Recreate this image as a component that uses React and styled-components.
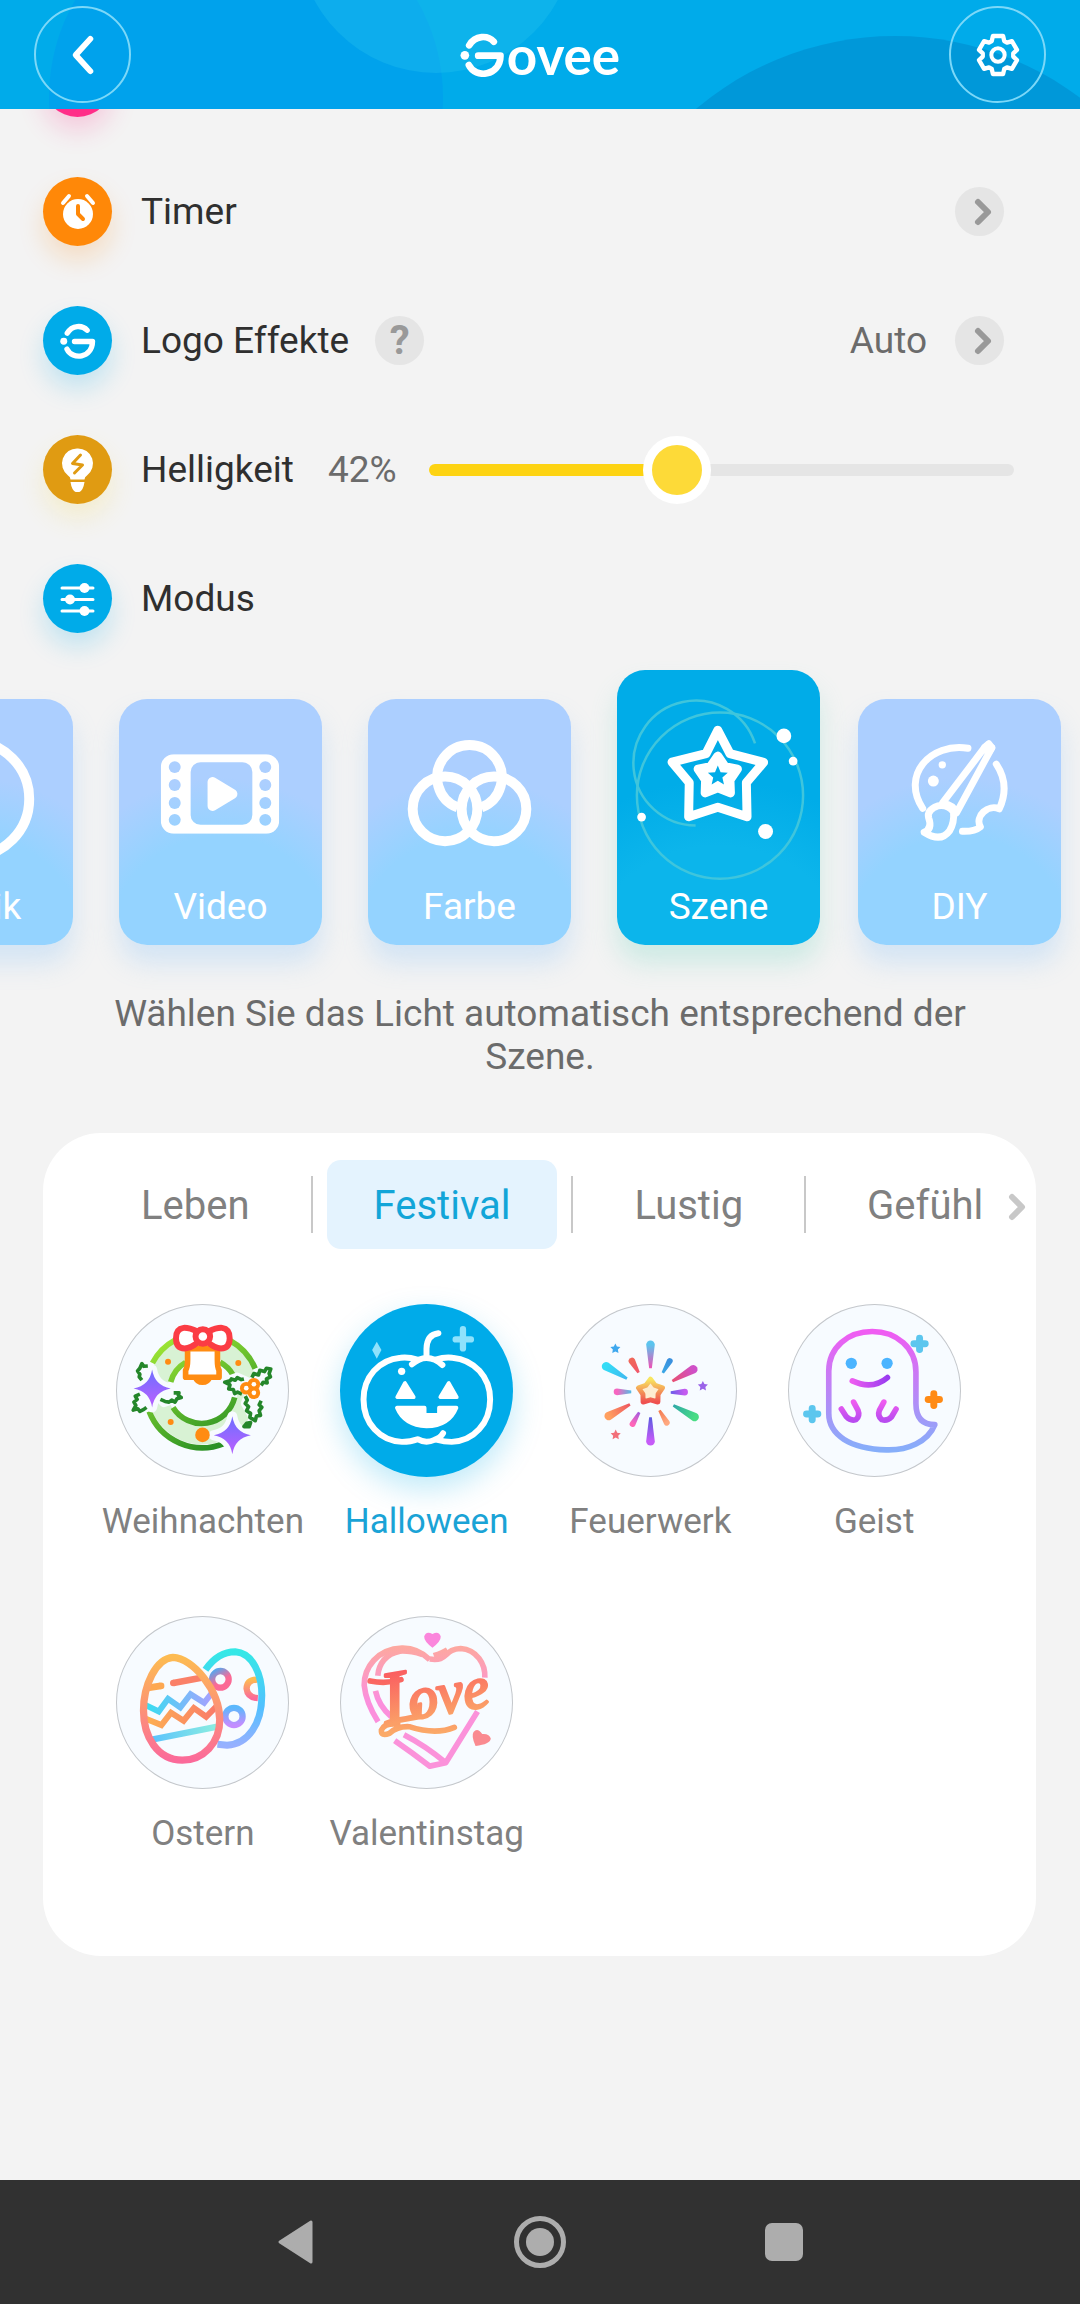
import React, { useState } from 'react';
import styled, { createGlobalStyle } from 'styled-components';

const GlobalStyle = createGlobalStyle`
  * {
    box-sizing: border-box;
  }

  body {
    margin: 0;
    background-color: #f3f3f3;
    font-family: Roboto, 'Liberation Sans', sans-serif;
    font-size: 37px;
    color: #2f2f2f;
  }

  button {
    padding: 0;
    border: none;
    background: none;
    font: inherit;
    color: inherit;
    cursor: pointer;
  }

  svg {
    display: block;
  }
`;

const Page = styled.div`
  display: flex;
  flex-direction: column;
  min-height: 100vh;
  overflow-x: hidden;
`;

/* ---------- header ---------- */

const Header = styled.header`
  position: relative;
  z-index: 2;
  display: flex;
  align-items: center;
  justify-content: space-between;
  height: 109px;
  padding: 0 34px;
  overflow: hidden;
  background-color: #00abea;
`;

const HeaderBubbles = styled.svg`
  position: absolute;
  top: 0;
  left: 0;
  z-index: -1;
  width: 100%;
  height: 109px;
`;

const RoundButton = styled.button`
  display: flex;
  align-items: center;
  justify-content: center;
  width: 97px;
  height: 97px;
  border: 2px solid #7cd8f8;
  border-radius: 50%;
`;

const Brand = styled.h1`
  display: flex;
  align-items: center;
  gap: 2px;
  margin: 0;
  font-family: Lato, 'Liberation Sans', sans-serif;
  font-size: 53px;
  font-weight: 700;
  line-height: 44px;
  color: #ffffff;
`;

/* ---------- settings list ---------- */

const Main = styled.main`
  flex: 1;
`;

/* the list is scrolled, its first row is half under the header */
const SettingsList = styled.div`
  margin-top: -91px;
`;

const Row = styled.div`
  display: flex;
  align-items: center;
  height: 129px;
  padding: 0 ${props => (props.$wide ? '66px' : '76px')} 0 43px;
`;

const RowIcon = styled.span`
  display: flex;
  flex-shrink: 0;
  align-items: center;
  justify-content: center;
  width: 69px;
  height: 69px;
  margin-right: 29px;
  border-radius: 50%;
  background-color: ${props => props.$color};
  box-shadow: 0 14px 26px ${props => props.$glow};
`;

const RowLabel = styled.label`
  white-space: nowrap;
`;

const RowValue = styled.span`
  margin-left: ${props => (props.$push ? 'auto' : '34px')};
  margin-right: ${props => (props.$push ? '28px' : '32px')};
  color: #6b6b6b;
`;

const SmallButton = styled.button`
  display: flex;
  flex-shrink: 0;
  align-items: center;
  justify-content: center;
  width: 49px;
  height: 49px;
  margin-left: ${props => (props.$push ? 'auto' : props.$gap || '0')};
  border-radius: 50%;
  background-color: #e5e5e5;
  font-size: 40px;
  font-weight: 700;
  line-height: 49px;
  color: #999999;
`;

const Slider = styled.input`
  flex: 1;
  min-width: 0;
  height: 68px;
  margin: 0;
  appearance: none;
  background: transparent;

  &::-webkit-slider-runnable-track {
    height: 12px;
    border-radius: 6px;
    background: linear-gradient(
      to right,
      #fdd312 ${props => props.value}%,
      #e5e5e5 ${props => props.value}%
    );
  }

  &::-webkit-slider-thumb {
    appearance: none;
    width: 68px;
    height: 68px;
    margin-top: -28px;
    border: 9px solid #ffffff;
    border-radius: 50%;
    background-color: #fdda38;
  }
`;

/* ---------- modes ---------- */

const ModeTrack = styled.div`
  display: flex;
  align-items: flex-end;
  gap: 46px;
  height: 329px;
  margin-left: -130px;
  padding: 0 20px 47px 0;
`;

const ModeCard = styled.button`
  flex-shrink: 0;
  width: 203px;
  margin-right: ${props => (props.$active ? '-8px' : '0')};
  padding-bottom: 16px;
  border-radius: 28px;
  color: #ffffff;
  line-height: 44px;
  background: ${props =>
    props.$active
      ? 'radial-gradient(ellipse 100% 60% at 50% 100%, #0cb5eb 60%, #00ace8 100%)'
      : 'radial-gradient(ellipse 85% 68% at 50% 100%, #94d3ff 65%, #accfff 100%)'};
  box-shadow: 0 18px 26px
    ${props => (props.$active ? 'rgba(120, 215, 195, 0.3)' : 'rgba(140, 195, 250, 0.3)')};

  svg {
    width: 100%;
  }
`;

const ModeText = styled.p`
  margin: 0;
  padding: 0 88px;
  text-align: center;
  line-height: 43px;
  color: #6b6b6b;
`;

/* ---------- scenes ---------- */

const Panel = styled.section`
  margin: 55px 44px 0 43px;
  padding: 27px 0 101px;
  border-radius: 58px;
  background-color: #ffffff;
`;

const TabBar = styled.div`
  position: relative;
  display: flex;
  align-items: center;
  padding-left: 51px;
`;

const TabClip = styled.div`
  display: flex;
  align-items: center;
  gap: 14px;
  overflow: hidden;
`;

const Tab = styled.button`
  flex-shrink: 0;
  height: 89px;
  padding: 2px 47px 0;
  border-radius: 14px;
  font-size: 40px;
  background-color: ${props => (props.$active ? '#e4f3fe' : 'transparent')};
  color: ${props => (props.$active ? '#12a5d8' : '#808080')};
`;

const Divider = styled.span`
  flex-shrink: 0;
  width: 2px;
  height: 57px;
  background-color: #c8c8c8;
`;

const MoreTabs = styled.button`
  position: absolute;
  right: 7px;
  top: 32px;
`;

const SceneGrid = styled.div`
  display: grid;
  grid-template-columns: repeat(4, 1fr);
  row-gap: 73px;
  padding: 55px 50px 0 48px;
`;

const Scene = styled.button`
  display: flex;
  flex-direction: column;
  align-items: center;
  gap: 24px;
  font-size: 35px;
  line-height: 42px;
  color: ${props => (props.$active ? '#1aa3d6' : '#808080')};
`;

const SceneArt = styled.span`
  width: 173px;
  height: 173px;
  border-radius: 50%;
  background-color: ${props => (props.$active ? '#00abe9' : '#f7fbff')};
  box-shadow: ${props =>
    props.$active ? '0 12px 30px rgba(0, 171, 233, 0.25)' : 'inset 0 0 0 1px #c4c7cb'};

  svg {
    width: 100%;
    height: 100%;
  }
`;

/* ---------- system navigation ---------- */

const NavBar = styled.nav`
  display: flex;
  justify-content: center;
  height: 124px;
  background-color: #313131;
`;

const NavButton = styled.button`
  display: flex;
  align-items: center;
  justify-content: center;
  width: 244px;
`;

/* ---------- drawings ---------- */

const starPoints = (cx, cy, outer, inner) =>
  Array.from({ length: 10 }, (_, i) => {
    const r = i % 2 ? inner : outer;
    const a = (Math.PI / 5) * i - Math.PI / 2;
    return `${(cx + r * Math.cos(a)).toFixed(1)},${(cy + r * Math.sin(a)).toFixed(1)}`;
  }).join(' ');

const gearPoints = Array.from({ length: 6 }, (_, i) =>
  [[-24, 46], [-15, 59], [15, 59], [24, 46]].map(([offset, r]) => {
    const a = ((i * 60 - 90 + offset) * Math.PI) / 180;
    return `${(75 + r * Math.cos(a)).toFixed(1)},${(75 + r * Math.sin(a)).toFixed(1)}`;
  })
)
  .flat()
  .join(' ');

const BrandMark = ({ width, height }) => (
  <svg width={width} height={height} viewBox="62 66 134 132" fill="none" aria-hidden="true">
    <g stroke="#fff" strokeWidth="20" strokeLinecap="round" strokeLinejoin="round">
      <path d="M89 103C107 72 145 72 163 92" />
      <path d="M116 134H183C182 196 108 204 88 162" />
    </g>
    <circle cx="76" cy="133" r="13" fill="#fff" />
  </svg>
);

const Chevron = ({ size = 30, color = '#999', thickness = 6, flip }) => (
  <svg width={size} height={size} viewBox="0 0 30 30" fill="none" aria-hidden="true">
    <path
      d={flip ? 'M20 4L10 15L20 26' : 'M13 5L23 15L13 25'}
      stroke={color}
      strokeWidth={thickness}
      strokeLinecap="round"
      strokeLinejoin="round"
    />
  </svg>
);

const TimerIcon = () => (
  <svg width="44" height="44" viewBox="0 0 44 44" fill="none" aria-hidden="true">
    <circle cx="22" cy="24" r="15" fill="#fff" />
    <path d="M7 13L13 6M37 13L31 6" stroke="#fff" strokeWidth="4" strokeLinecap="round" />
    <path d="M22 16V24L27 29" stroke="#ff8808" strokeWidth="4" strokeLinecap="round" strokeLinejoin="round" />
  </svg>
);

const BulbIcon = () => (
  <svg width="44" height="44" viewBox="0 0 44 44" fill="none" aria-hidden="true">
    <path d="M21.500 0.500A15 15 0 0 0 12 27.500Q14.500 29 14.500 31.500H28.500Q28.500 29 31 27.500A15 15 0 0 0 21.500 0.500Z" fill="#fff" />
    <path d="M14.500 34H28.500Q27 44 21.500 44.500Q16 44 14.500 34Z" fill="#fff" />
    <path d="M24.500 7L16.500 15.500L26.500 17L18.500 25" stroke="#e09b12" strokeWidth="3" strokeLinecap="round" strokeLinejoin="round" />
  </svg>
);

const ModeIcon = () => (
  <svg width="44" height="44" viewBox="0 0 44 44" fill="#fff" aria-hidden="true">
    <path d="M6 11H37M6 22.500H37M6 34H37" stroke="#fff" strokeWidth="3" strokeLinecap="round" />
    <circle cx="28.500" cy="11" r="5" />
    <circle cx="14" cy="22.500" r="5" />
    <circle cx="28.500" cy="34" r="5" />
  </svg>
);

const MusicArt = () => (
  <svg height="186" viewBox="0 0 204 186" fill="none" aria-hidden="true">
    <circle cx="102" cy="100" r="58" stroke="#fff" strokeWidth="10" />
    <path d="M92 122V82L120 74V114" stroke="#fff" strokeWidth="8" strokeLinecap="round" strokeLinejoin="round" />
    <circle cx="84" cy="122" r="9" fill="#fff" />
    <circle cx="112" cy="115" r="9" fill="#fff" />
  </svg>
);

const VideoArt = () => (
  <svg height="186" viewBox="0 0 204 186" aria-hidden="true">
    <mask id="film">
      <rect x="42" y="55" width="119" height="80" rx="13" fill="#fff" />
      <rect x="72" y="63" width="62" height="63" rx="10" fill="#000" />
      {[68, 86, 104, 121].map(y => (
        <g key={y} fill="#000">
          <circle cx="56" cy={y} r="6" />
          <circle cx="147" cy={y} r="6" />
        </g>
      ))}
    </mask>
    <rect x="42" y="55" width="119" height="80" fill="#fff" mask="url(#film)" />
    <path d="M94 83V107L114 95Z" fill="#fff" stroke="#fff" strokeWidth="10" strokeLinejoin="round" />
  </svg>
);

const ColorArt = () => (
  <svg height="186" viewBox="0 0 204 186" fill="none" stroke="#fff" strokeWidth="10" aria-hidden="true">
    <circle cx="77.400" cy="110" r="32.500" />
    <circle cx="126.600" cy="110" r="32.500" />
    <path d="M90 108.500A32.500 32.500 0 1 1 114 108.500" />
  </svg>
);

const SceneModeArt = () => (
  <svg height="215" viewBox="0 0 204 215" fill="none" aria-hidden="true">
    <g stroke="#3fc5dc" strokeWidth="2.500">
      <circle cx="103.500" cy="125.700" r="83.500" />
      <path d="M138.700 73.300A62.700 62.700 0 1 0 79 155.700" />
    </g>
    <path
      d="M101.300 60L113.500 83.500L147.300 92.300L130 112.700L130.700 147L101.300 137.300L72 147L72.600 112.700L55.300 92L89.500 83.500Z"
      stroke="#fff"
      strokeWidth="9"
      strokeLinejoin="round"
    />
    <path
      d="M101.300 86L108.500 96.500L121 99L113.500 110L114 123L101.300 118L88.600 123L89 110L81.500 99L94 96.500Z"
      fill="#fff"
      stroke="#fff"
      strokeWidth="9"
      strokeLinejoin="round"
    />
    <polygon points={starPoints(101.3, 106, 10.5, 4.8)} fill="#00abe8" />
    <g fill="#fff">
      <circle cx="167.700" cy="65.700" r="7.400" />
      <circle cx="177" cy="91" r="4.400" />
      <circle cx="24.700" cy="147.300" r="4.400" />
      <circle cx="149.300" cy="161.700" r="7.500" />
    </g>
  </svg>
);

const DiyArt = () => (
  <svg height="186" viewBox="0 0 204 186" fill="none" aria-hidden="true">
    <g stroke="#fff" strokeWidth="7" strokeLinecap="round" strokeLinejoin="round">
      <path d="M110.500 49C73 43 43 76 65 109.500" />
      <path d="M139 65Q153 86 142 110C131 105 117 117 123 128Q117 133 105 132.500" />
      <path d="M131.500 44.500L127.500 48L85 104Q96 106 99 114L134.500 48.500Z" />
      <path d="M127.500 48L134.500 48.500L131 54Z" fill="#fff" />
      <path d="M80 107Q69 111 71 119Q75 130 66.500 133.500Q83 144 92 132Q97 124 96 113Q90 105 80 107Z" />
    </g>
    <circle cx="84.700" cy="65.700" r="3.700" fill="#fff" />
    <circle cx="75.700" cy="82" r="5.500" fill="#fff" />
  </svg>
);

const fourPoint = (x, y) =>
  `M${x} ${y - 57}Q${x + 8} ${y - 8} ${x + 56} ${y}Q${x + 8} ${y + 8} ${x} ${y + 57}Q${x - 8} ${y + 8} ${x - 56} ${y}Q${x - 8} ${y - 8} ${x} ${y - 57}Z`;

const WreathArt = () => (
  <svg viewBox="80 70 522 522" fill="none" aria-hidden="true">
    <defs>
      <linearGradient id="wreathOuter" gradientUnits="userSpaceOnUse" x1="200" y1="170" x2="380" y2="500">
        <stop offset="0" stopColor="#a4ea35" />
        <stop offset="1" stopColor="#2a9125" />
      </linearGradient>
      <linearGradient id="wreathStar" x1="0" y1="0" x2="0" y2="1">
        <stop offset="0.2" stopColor="#7c6cff" />
        <stop offset="0.8" stopColor="#ad62ff" />
      </linearGradient>
    </defs>
    <circle cx="341" cy="330" r="135" stroke="#d8f2d4" strokeWidth="58" />
    <g stroke="url(#wreathOuter)" strokeWidth="17">
      <path d="M190 248A172 172 0 0 1 260 178M424 180A172 172 0 0 1 500 265M180 394A172 172 0 0 0 405 491" />
      <path d="M245 305A99 99 0 0 1 290 246M394 246A99 99 0 0 1 433 284M252 382A102 102 0 0 0 438 352" />
    </g>
    {/* holly with a halo that cuts it out of the wreath */}
    <g stroke="#f7fbff" strokeWidth="30" strokeLinejoin="round" fill="#f7fbff">
      <path d="M465 322L410 305L445 292L490 312L508 285L545 268L535 310L510 325L516 390L500 420L472 370L484 340Z" />
      <path d={fourPoint(189, 325)} />
      <path d={fourPoint(431, 466)} />
      <path d="M215 355L275 348L225 366ZM150 300V252L175 256M135 390L148 345L168 382Z" />
    </g>
    <g stroke="#24862a" strokeWidth="11" strokeLinejoin="round">
      <path d="M460 342L447 336L438 340L434 328L420 326L424 314L408 306L424 302L428 296L440 300L446 292L458 298L466 296" />
      <path d="M490 292L496 280L510 284L514 270L528 274L534 264L547 266L542 280L546 290L534 296L536 308L524 306L518 316" />
      <path d="M470 348L476 360L470 370L480 380L474 392L486 400L484 412L500 422L504 408L516 406L512 392L520 382L512 374L518 362" />
      <path d="M176 257L164 258L158 250L152 264L145 272L152 282L150 290L158 300" />
      <path d="M152 342L138 348L144 358L134 366L140 376L132 390L146 386L152 394L164 388L172 382" />
      <path d="M214 358L228 364L240 366L248 360L258 366L264 356L277 352L268 346L270 338L254 338" />
      <path d="M466 440L474 430L486 428L482 440Z" />
    </g>
    <g fill="#ff8c12">
      <circle cx="473" cy="324" r="19" />
      <circle cx="496" cy="312" r="19" />
      <circle cx="496" cy="338" r="19" />
      <circle cx="237" cy="244" r="9" />
      <circle cx="449" cy="248" r="9" />
      <circle cx="245" cy="426" r="9" />
      <circle cx="341" cy="465" r="22" />
    </g>
    <g fill="#fff">
      <circle cx="473" cy="324" r="7" />
      <circle cx="496" cy="312" r="7" />
      <circle cx="496" cy="338" r="7" />
    </g>
    <path d={fourPoint(189, 325)} fill="url(#wreathStar)" />
    <path d={fourPoint(431, 466)} fill="url(#wreathStar)" />
    <g stroke="#ff8c12" strokeWidth="17" strokeLinejoin="round" fill="#fff">
      <path d="M320 292A22 20 0 0 0 362 292" />
      <path d="M296 205V240Q296 262 290 270V291H391V270Q386 262 386 240V205Z" />
    </g>
    <g stroke="#fb3c44" strokeWidth="18" strokeLinejoin="round" fill="#fff">
      <path d="M326 153Q300 141 284 142Q261 145 261 173Q261 203 287 204Q306 203 326 186Z" />
      <path d="M358 153Q384 141 400 142Q423 145 423 173Q423 203 397 204Q378 203 358 186Z" />
      <circle cx="342" cy="168" r="22" />
    </g>
  </svg>
);

const PumpkinArt = () => (
  <svg viewBox="751 70 522 522" fill="none" aria-hidden="true">
    <g stroke="#fff" strokeWidth="18" strokeLinecap="round" strokeLinejoin="round">
      <path d="M968 252Q990 233 1012 233Q1038 233 1060 254" />
      <path d="M984 238Q958 229 934 232C868 238 822 290 822 358C822 430 872 484 938 486Q965 486 985 478Q1010 492 1036 480Q1054 474 1062 460" />
      <path d="M1040 238Q1066 229 1090 232C1156 238 1204 290 1204 358C1204 430 1154 484 1088 486Q1064 486 1046 480" />
      <path d="M1012 226V205Q1013 162 1048 158" />
    </g>
    <g fill="#fff" stroke="#fff" strokeWidth="12" strokeLinejoin="round">
      <path d="M947 309L924 351H973ZM1079 309L1054 351H1103Z" />
      <path d="M923 383H1006V405H1050V383H1102Q1080 438 1012 439Q945 436 923 383Z" />
    </g>
    <circle cx="937" cy="273" r="11" fill="#fff" />
    <path d="M1122 146V204M1100 177H1146" stroke="#8fe2fc" strokeWidth="19" strokeLinecap="round" />
    <path d="M862 184L876 209L862 235L848 209Z" fill="#8fe2fc" />
  </svg>
);

/* x1, y1 is the thin end, x2, y2 the round one */
const rays = [
  [335, 264, 335, 193, 13, '#f04fb4', '#5cc4ee'],
  [299, 277, 279, 242, 10, '#f0566b', '#f0665a'],
  [372, 278, 393, 242, 9, '#3aa8e6', '#3a90de'],
  [264, 295, 201, 258, 13, '#3fb8f0', '#35dcf6'],
  [401, 303, 464, 267, 13, '#e84f70', '#cf50c8'],
  [277, 335, 234, 335, 10, '#52bce4', '#f765c0'],
  [396, 337, 438, 336, 10, '#6a5be8', '#c45bf0'],
  [273, 373, 209, 408, 13, '#ee5560', '#ffa060'],
  [301, 397, 281, 432, 9, '#a35be0', '#ff66b8'],
  [362, 391, 384, 428, 9, '#f37a50', '#ffa880'],
  [404, 376, 468, 411, 13, '#2fa8a8', '#48dc84'],
  [335, 412, 335, 484, 13, '#5a5be0', '#c65bf8']
];

const FireworkArt = () => (
  <svg viewBox="74 70 522 522" aria-hidden="true">
    <defs>
      <linearGradient id="fireStar" x1="0" y1="0" x2="0" y2="1">
        <stop offset="0" stopColor="#f8e660" />
        <stop offset="1" stopColor="#ef5050" />
      </linearGradient>
      {rays.map(([x1, y1, x2, y2, , from, to], i) => (
        <linearGradient key={i} id={`ray${i}`} gradientUnits="userSpaceOnUse" x1={x1} y1={y1} x2={x2} y2={y2}>
          <stop offset="0" stopColor={from} />
          <stop offset="1" stopColor={to} />
        </linearGradient>
      ))}
    </defs>
    {rays.map(([x1, y1, x2, y2, r], i) => {
      const len = Math.hypot(x2 - x1, y2 - y1);
      const nx = -(y2 - y1) / len;
      const ny = (x2 - x1) / len;
      return (
        <path
          key={i}
          fill={`url(#ray${i})`}
          d={`M${x1 + nx * 4} ${y1 + ny * 4}L${x2 + nx * r} ${y2 + ny * r}A${r} ${r} 0 0 0 ${x2 - nx * r} ${y2 - ny * r}L${x1 - nx * 4} ${y1 - ny * 4}Z`}
        />
      );
    })}
    <polygon
      points={starPoints(335, 335, 38, 24)}
      fill="#fdecd0"
      stroke="url(#fireStar)"
      strokeWidth="15"
      strokeLinejoin="round"
    />
    <polygon points={starPoints(229, 205, 16, 8)} fill="#3fa8ee" />
    <polygon points={starPoints(493, 318, 16, 8)} fill="#9a63e8" />
    <polygon points={starPoints(230, 465, 16, 8)} fill="#f2707a" />
  </svg>
);

const GhostArt = () => (
  <svg viewBox="743 70 522 522" fill="none" aria-hidden="true">
    <defs>
      <linearGradient id="ghostBody" x1="0" y1="0" x2="0" y2="1">
        <stop offset="0" stopColor="#f05cf2" />
        <stop offset="1" stopColor="#86aefa" />
      </linearGradient>
      <linearGradient id="ghostMouth" x1="0" y1="0" x2="1" y2="0">
        <stop offset="0" stopColor="#ec5cf0" />
        <stop offset="1" stopColor="#9a3cf0" />
      </linearGradient>
      <linearGradient id="ghostHand" x1="0" y1="0" x2="0" y2="1">
        <stop offset="0" stopColor="#ee5cf0" />
        <stop offset="1" stopColor="#b94cf0" />
      </linearGradient>
    </defs>
    <g strokeWidth="17" strokeLinecap="round" strokeLinejoin="round">
      <path
        d="M866 272C866 200 925 153 997 153C1070 153 1129 202 1129 275V370C1129 415 1150 434 1186 434C1165 486 1104 512 1040 510C930 507 866 465 866 400Z"
        stroke="url(#ghostBody)"
      />
      <path d="M937 302Q998 330 1043 292" stroke="url(#ghostMouth)" />
      <path d="M904 387L919 410Q932 424 948 419Q961 408 954 390L941 366" stroke="url(#ghostHand)" />
      <path d="M1069 387L1055 411Q1042 424 1026 419Q1012 408 1019 390L1032 366" stroke="url(#ghostHand)" />
    </g>
    <circle cx="934" cy="249" r="17" fill="#4bb4ff" />
    <circle cx="1042" cy="249" r="17" fill="#4bb4ff" />
    <g strokeWidth="21" strokeLinecap="round">
      <path d="M1140 173V207M1123 190H1157M816 385V419M799 402H833" stroke="#5cc6ee" />
      <path d="M1183 341V376M1166 358H1200" stroke="#ff8a14" />
    </g>
  </svg>
);

const EggArt = () => (
  <svg viewBox="80 76 522 522" fill="none" aria-hidden="true">
    <defs>
      <linearGradient id="eggFront" x1="0" y1="0" x2="0" y2="1">
        <stop offset="0" stopColor="#fdbb52" />
        <stop offset="1" stopColor="#fb6a9a" />
      </linearGradient>
      <linearGradient id="eggBack" x1="0" y1="0" x2="0" y2="1">
        <stop offset="0" stopColor="#35e8e6" />
        <stop offset="0.6" stopColor="#52c0ff" />
        <stop offset="1" stopColor="#96b0ff" />
      </linearGradient>
      <linearGradient id="dotPink" x1="0" y1="0" x2="0.6" y2="1">
        <stop offset="0" stopColor="#52a8f0" />
        <stop offset="0.7" stopColor="#fb6a95" />
      </linearGradient>
      <linearGradient id="dotBlue" x1="0" y1="0" x2="0" y2="1">
        <stop offset="0" stopColor="#5cb8fc" />
        <stop offset="1" stopColor="#c48cff" />
      </linearGradient>
      <linearGradient id="bandCool" x1="0" y1="0" x2="1" y2="0">
        <stop offset="0" stopColor="#35dff0" />
        <stop offset="1" stopColor="#a8a0ff" />
      </linearGradient>
      <linearGradient id="bandWarm" x1="0" y1="0" x2="1" y2="0">
        <stop offset="0" stopColor="#fdb052" />
        <stop offset="1" stopColor="#f97a6a" />
      </linearGradient>
      <linearGradient id="bandSea" gradientUnits="userSpaceOnUse" x1="195" y1="0" x2="385" y2="0">
        <stop offset="0" stopColor="#5cc4fc" />
        <stop offset="1" stopColor="#8ceee0" />
      </linearGradient>
      <clipPath id="eggClip">
        <path d="M252 201C312 203 392 300 393 388C394 460 342 511 280 511C205 511 163 440 163 362C163 285 200 205 252 201Z" />
      </clipPath>
    </defs>
    <circle cx="395" cy="267" r="25" stroke="url(#dotPink)" strokeWidth="19" />
    <circle cx="436" cy="379" r="26" stroke="url(#dotBlue)" strokeWidth="19" />
    <path d="M506 268Q475 268 474 295Q477 322 508 324" stroke="url(#eggFront)" strokeWidth="19" />
    <path
      d="M350 238Q388 184 440 184C494 188 520 255 520 315C520 400 480 462 415 466L386 463"
      stroke="url(#eggBack)"
      strokeWidth="21"
    />
    <path
      d="M252 201C312 203 392 300 393 388C394 460 342 511 280 511C205 511 163 440 163 362C163 285 200 205 252 201Z"
      fill="#f7fbff"
    />
    <g clipPath="url(#eggClip)">
      <path d="M176 293L215 287" stroke="#fda852" strokeWidth="21" />
      <circle cx="216" cy="287" r="10" fill="#fda852" />
      <path d="M253 278L346 261" stroke="#fa8068" strokeWidth="20" />
      <circle cx="253" cy="278" r="10" fill="#fa8068" />
      <path d="M168 344L209 364L237 326L274 352L305 312L346 338L371 306" stroke="url(#bandCool)" strokeWidth="18" />
      <path d="M170 386L217 405L246 368L284 392L315 354L352 380L386 346" stroke="url(#bandWarm)" strokeWidth="18" />
      <path d="M188 449L386 410" stroke="url(#bandSea)" strokeWidth="19" />
    </g>
    <path
      d="M252 201C312 203 392 300 393 388C394 460 342 511 280 511C205 511 163 440 163 362C163 285 200 205 252 201Z"
      stroke="url(#eggFront)"
      strokeWidth="22"
    />
  </svg>
);

const LoveText = styled.text`
  font-family: 'Liberation Serif', serif;
  font-style: italic;
  font-weight: 400;
  fill: url(#loveWord);
  stroke: url(#loveWord);
  stroke-width: 8px;
  stroke-linejoin: round;
`;

const LoveArt = () => (
  <svg viewBox="751 76 522 522" fill="none" aria-hidden="true">
    <defs>
      <linearGradient id="loveHeart" gradientUnits="userSpaceOnUse" x1="0" y1="170" x2="0" y2="330">
        <stop offset="0" stopColor="#fda8a0" />
        <stop offset="1" stopColor="#fb8fdc" />
      </linearGradient>
      <linearGradient id="loveWord" gradientUnits="userSpaceOnUse" x1="0" y1="230" x2="0" y2="430">
        <stop offset="0" stopColor="#fa5560" />
        <stop offset="1" stopColor="#fbaa68" />
      </linearGradient>
    </defs>
    <g stroke="url(#loveHeart)" strokeWidth="17" strokeLinejoin="round">
      <path d="M1022 208Q985 172 938 173C862 176 824 232 824 285C828 325 845 362 866 395" />
      <path d="M1000 192Q960 180 932 182C888 190 868 222 865 256" />
      <path d="M858 302Q868 348 906 380" />
      <path d="M1022 206C1078 215 1064 175 1115 174C1164 178 1190 220 1188 262" />
      <path d="M1034 196Q1062 186 1075 178" />
    </g>
    <g stroke="#fb92da" strokeWidth="17" strokeLinejoin="round">
      <path d="M916 452Q968 488 1022 529L1070 519L1166 364" />
      <path d="M944 434Q1010 468 1068 517" />
    </g>
    <path
      d="M842 272Q890 282 935 268M925 402Q885 398 876 420Q874 440 900 430Q925 408 960 410Q1040 436 1096 412"
      stroke="url(#loveWord)"
      strokeWidth="17"
      strokeLinecap="round"
    />
    <LoveText x="890" y="402" fontSize="225" transform="rotate(-10 890 402)">
      L
      <tspan fontSize="178" dx="-48">ove</tspan>
    </LoveText>
    <path d="M1030 172Q1004 152 1005 138Q1010 120 1030 130Q1050 120 1055 138Q1056 152 1030 172Z" fill="#fb86dc" />
    <path d="M1160 468Q1146 438 1154 426Q1166 412 1180 432Q1202 430 1206 446Q1204 464 1160 468Z" fill="#fa8a90" />
  </svg>
);

/* ---------- app ---------- */

const modes = [
  { name: 'Musik', Art: MusicArt },
  { name: 'Video', Art: VideoArt },
  { name: 'Farbe', Art: ColorArt },
  { name: 'Szene', Art: SceneModeArt },
  { name: 'DIY', Art: DiyArt }
];

const tabs = ['Leben', 'Festival', 'Lustig', 'Gefühl'];

const scenes = [
  { name: 'Weihnachten', Art: WreathArt },
  { name: 'Halloween', Art: PumpkinArt },
  { name: 'Feuerwerk', Art: FireworkArt },
  { name: 'Geist', Art: GhostArt },
  { name: 'Ostern', Art: EggArt },
  { name: 'Valentinstag', Art: LoveArt }
];

const App = () => {
  const [brightness, setBrightness] = useState(42);
  const [tab, setTab] = useState('Festival');
  const [scene, setScene] = useState('Halloween');

  return (
    <Page>
      <GlobalStyle />
      <Header>
        <HeaderBubbles viewBox="0 0 1080 109" preserveAspectRatio="none" aria-hidden="true">
          <circle cx="246" cy="98" r="197" fill="#00a2ec" />
          <circle cx="436" cy="-65" r="138" fill="#2cc8ee" fillOpacity="0.3" />
          <circle cx="895" cy="344" r="308" fill="#0098d9" />
        </HeaderBubbles>
        <RoundButton aria-label="Zurück">
          <Chevron size={44} color="#fff" thickness={4} flip />
        </RoundButton>
        <Brand aria-label="Govee">
          <BrandMark width={45} height={44} />
          <span>ovee</span>
        </Brand>
        <RoundButton aria-label="Einstellungen">
          <svg width="50" height="50" viewBox="0 0 150 150" fill="none" stroke="#fff" aria-hidden="true">
            <polygon points={gearPoints} strokeWidth="13" strokeLinejoin="round" />
            <circle cx="75" cy="75" r="20" strokeWidth="12" />
          </svg>
        </RoundButton>
      </Header>

      <Main>
        <SettingsList>
          <Row>
            <RowIcon $color="#ff2e88" $glow="rgba(255, 46, 136, 0.2)" />
          </Row>
          <Row>
            <RowIcon $color="#ff8808" $glow="rgba(255, 136, 8, 0.2)">
              <TimerIcon />
            </RowIcon>
            <RowLabel as="span">Timer</RowLabel>
            <SmallButton $push aria-label="Timer öffnen">
              <Chevron />
            </SmallButton>
          </Row>
          <Row>
            <RowIcon $color="#00abe9" $glow="rgba(0, 171, 233, 0.2)">
              <BrandMark width={36} height={36} />
            </RowIcon>
            <RowLabel as="span">Logo Effekte</RowLabel>
            <SmallButton $gap="26px">?</SmallButton>
            <RowValue $push>Auto</RowValue>
            <SmallButton aria-label="Logo Effekte öffnen">
              <Chevron />
            </SmallButton>
          </Row>
          <Row $wide>
            <RowIcon $color="#e09b12" $glow="rgba(250, 215, 60, 0.2)">
              <BulbIcon />
            </RowIcon>
            <RowLabel htmlFor="brightness">Helligkeit</RowLabel>
            <RowValue>{brightness}%</RowValue>
            <Slider
              id="brightness"
              type="range"
              min="1"
              max="100"
              value={brightness}
              onChange={e => setBrightness(Number(e.target.value))}
            />
          </Row>
          <Row>
            <RowIcon $color="#00abe9" $glow="rgba(0, 171, 233, 0.2)">
              <ModeIcon />
            </RowIcon>
            <RowLabel as="span">Modus</RowLabel>
          </Row>
        </SettingsList>

        <ModeTrack>
          {modes.map(({ name, Art }) => (
            <ModeCard key={name} $active={name === 'Szene'}>
              <Art />
              {name}
            </ModeCard>
          ))}
        </ModeTrack>
        <ModeText>Wählen Sie das Licht automatisch entsprechend der Szene.</ModeText>

        <Panel>
          <TabBar>
            <TabClip>
              {tabs.map((name, i) => (
                <React.Fragment key={name}>
                  {i > 0 && <Divider />}
                  <Tab $active={name === tab} onClick={() => setTab(name)}>
                    {name}
                  </Tab>
                </React.Fragment>
              ))}
            </TabClip>
            <MoreTabs aria-label="Weitere Kategorien">
              <Chevron color="#c8c8c8" />
            </MoreTabs>
          </TabBar>
          <SceneGrid>
            {scenes.map(({ name, Art }) => (
              <Scene key={name} $active={name === scene} onClick={() => setScene(name)}>
                <SceneArt $active={name === scene}>
                  <Art />
                </SceneArt>
                {name}
              </Scene>
            ))}
          </SceneGrid>
        </Panel>
      </Main>

      <NavBar>
        <NavButton aria-label="Zurück">
          <svg width="36" height="46" viewBox="0 0 36 46" fill="#adadad" aria-hidden="true">
            <path d="M33 3V43L2 23Z" stroke="#adadad" strokeWidth="3" strokeLinejoin="round" />
          </svg>
        </NavButton>
        <NavButton aria-label="Startseite">
          <svg width="54" height="54" viewBox="0 0 54 54" fill="none" aria-hidden="true">
            <circle cx="27" cy="27" r="23.500" stroke="#adadad" strokeWidth="5" />
            <circle cx="27" cy="27" r="14" fill="#adadad" />
          </svg>
        </NavButton>
        <NavButton aria-label="Übersicht">
          <svg width="38" height="38" viewBox="0 0 38 38" aria-hidden="true">
            <rect width="38" height="38" rx="7" fill="#adadad" />
          </svg>
        </NavButton>
      </NavBar>
    </Page>
  );
};

export default App;
